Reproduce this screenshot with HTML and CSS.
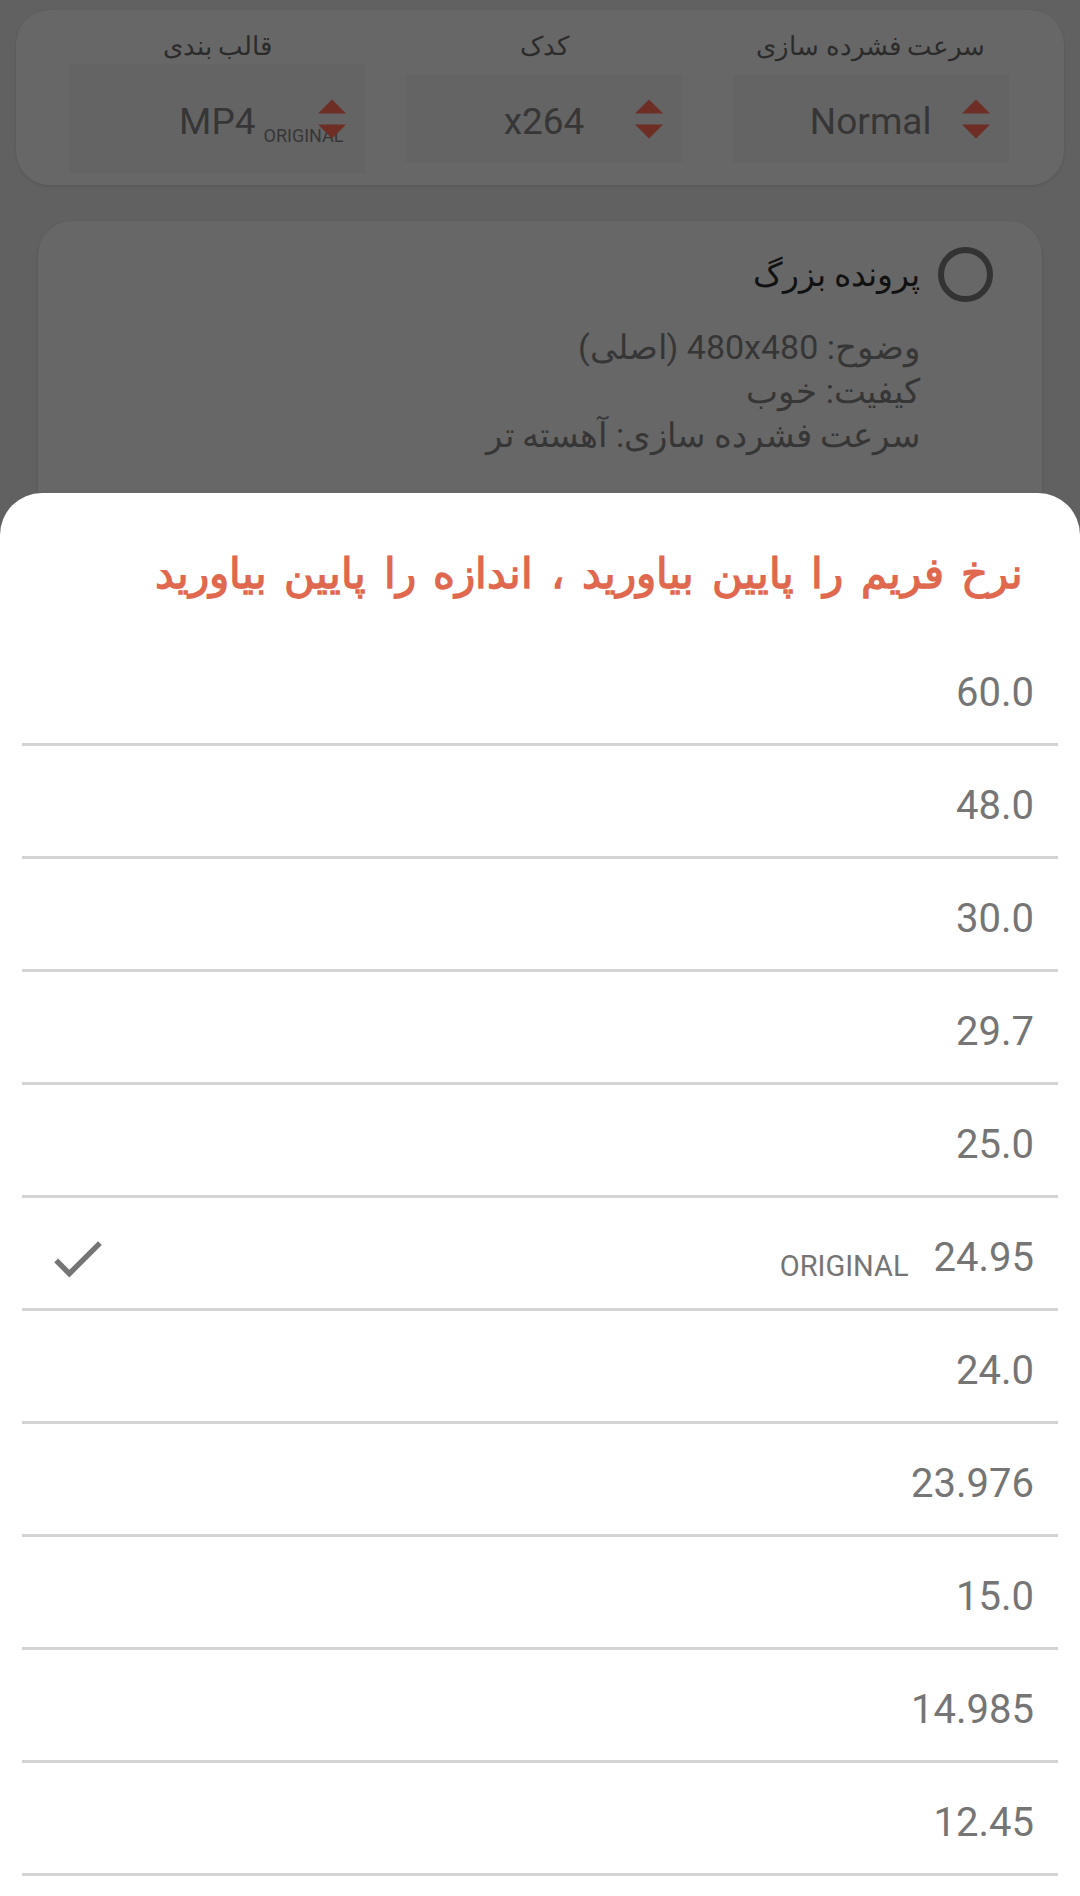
FILE: index.html
```html
<!DOCTYPE html>
<html lang="fa">
<head>
<meta charset="utf-8">
<title>Frame rate</title>
<link rel="stylesheet" href="styles.css">
</head>
<body>
<div class="screen">
  <section class="settings-card">
    <div class="setting">
      <div class="setting-label">سرعت فشرده سازی</div>
      <div class="setting-cell">
        <div class="spinner">
          <span class="spin-value">Normal</span>
          <span class="spin-arrows"><i class="up"></i><i class="down"></i></span>
        </div>
      </div>
    </div>
    <div class="setting">
      <div class="setting-label">کدک</div>
      <div class="setting-cell">
        <div class="spinner">
          <span class="spin-value">x264</span>
          <span class="spin-arrows"><i class="up"></i><i class="down"></i></span>
        </div>
      </div>
    </div>
    <div class="setting">
      <div class="setting-label">قالب بندی</div>
      <div class="setting-cell">
        <div class="spinner spinner-wide">
          <span class="spin-value">MP4<span class="spin-badge">ORIGINAL</span></span>
          <span class="spin-arrows"><i class="up"></i><i class="down"></i></span>
        </div>
      </div>
    </div>
  </section>

  <section class="preset-card">
    <div class="preset-head">
      <span class="radio"></span>
      <span class="preset-title">پرونده بزرگ</span>
    </div>
    <div class="preset-details">
      <div>وضوح: 480x480 (اصلی)</div>
      <div>کیفیت: خوب</div>
      <div>سرعت فشرده سازی: آهسته تر</div>
    </div>
  </section>

  <div class="sheet">
    <h2 class="sheet-title">نرخ فریم را پایین بیاورید ، اندازه را پایین بیاورید</h2>
    <ul class="rate-list">
      <li class="rate"><span class="rate-value">60.0</span></li>
      <li class="rate"><span class="rate-value">48.0</span></li>
      <li class="rate"><span class="rate-value">30.0</span></li>
      <li class="rate"><span class="rate-value">29.7</span></li>
      <li class="rate"><span class="rate-value">25.0</span></li>
      <li class="rate rate-selected">
        <span class="rate-value">24.95</span>
        <span class="rate-tag">ORIGINAL</span>
        <svg class="rate-check" viewBox="0 0 24 24"><path d="M9 16.17L4.83 12l-1.42 1.41L9 19 21 7l-1.41-1.41z"/></svg>
      </li>
      <li class="rate"><span class="rate-value">24.0</span></li>
      <li class="rate"><span class="rate-value">23.976</span></li>
      <li class="rate"><span class="rate-value">15.0</span></li>
      <li class="rate"><span class="rate-value">14.985</span></li>
      <li class="rate"><span class="rate-value">12.45</span></li>
    </ul>
  </div>
</div>
</body>
</html>
```

FILE: styles.css
```css
* { box-sizing: border-box; }

html, body {
  margin: 0;
  padding: 0;
}

body {
  width: 1080px;
  height: 1896px;
  overflow: hidden;
  background: #616161;
  font-family: Roboto, sans-serif;
}

.screen {
  position: relative;
  width: 1080px;
  height: 1896px;
  padding-top: 10px;
}

/* ---------- top settings card ---------- */
.settings-card {
  margin: 0 16px;
  height: 175px;
  border-radius: 34px;
  background: #676767;
  box-shadow: 0 1px 3px rgba(0, 0, 0, 0.12);
  display: grid;
  grid-template-columns: repeat(3, 1fr);
  direction: rtl;
  padding: 0 30px 10px 38px;
}

.setting {
  display: flex;
  flex-direction: column;
  align-items: center;
}

.setting-label {
  margin-top: 20px;
  height: 32px;
  line-height: 32px;
  font-size: 26px;
  color: #2b2b2b;
}

.setting-cell {
  flex: 1;
  display: flex;
  align-items: center;
}

.spinner {
  position: relative;
  direction: ltr;
  width: 276px;
  height: 88px;
  background: #646464;
  display: flex;
  align-items: center;
  justify-content: center;
  padding-top: 5px;
}

.spinner-wide {
  width: 296px;
  height: 109px;
}

.spin-value {
  position: relative;
  font-size: 37px;
  color: #363636;
  line-height: 1;
}

.spin-badge {
  position: absolute;
  left: 100%;
  margin-left: 8px;
  top: 24px;
  font-size: 18px;
  color: #363636;
}

.spin-arrows {
  position: absolute;
  right: 19px;
  top: 50%;
  transform: translateY(-50%);
  display: flex;
  flex-direction: column;
  gap: 11px;
}

.spin-arrows i {
  display: block;
  width: 0;
  height: 0;
  border-left: 14px solid transparent;
  border-right: 14px solid transparent;
}

.spin-arrows .up { border-bottom: 14px solid #6f2e25; }
.spin-arrows .down { border-top: 14px solid #6f2e25; }

/* ---------- preset card ---------- */
.preset-card {
  margin: 36px 38px 0;
  height: 400px;
  border-radius: 34px;
  background: #676767;
  box-shadow: 0 1px 3px rgba(0, 0, 0, 0.12);
  direction: rtl;
  padding: 26px 49px 0 0;
}

.preset-head {
  display: flex;
  align-items: center;
  gap: 18px;
}

.radio {
  width: 55px;
  height: 55px;
  border: 6px solid #333333;
  border-radius: 50%;
  flex: none;
}

.preset-title {
  font-size: 33px;
  color: #111111;
}

.preset-details {
  margin-top: 23px;
  padding-right: 73px;
  font-size: 34px;
  line-height: 44px;
  color: #363636;
}

/* ---------- bottom sheet ---------- */
.sheet {
  position: absolute;
  left: 0;
  right: 0;
  top: 493px;
  bottom: 0;
  background: #ffffff;
  border-radius: 42px 42px 0 0;
}

.sheet-title {
  margin: 0;
  height: 140px;
  padding: 56px 57px 0 0;
  direction: rtl;
  font-size: 42px;
  word-spacing: 7px;
  font-weight: bold;
  color: #e0684e;
  line-height: 50px;
  white-space: nowrap;
}

.rate-list {
  list-style: none;
  margin: 0 22px;
  padding: 0;
}

.rate {
  height: 113px;
  border-bottom: 3px solid #d4d4d4;
  display: flex;
  flex-direction: row-reverse;
  align-items: center;
  padding: 8px 24px 0 0;
}

.rate-value {
  font-size: 40px;
  color: #757575;
}

.rate-tag {
  font-size: 29px;
  color: #757575;
  margin-right: 25px;
  margin-top: 18px;
}

.rate-check {
  width: 65px;
  height: 65px;
  fill: #757575;
  margin-right: auto;
  margin-left: 23px;
  margin-top: 2px;
}
```
